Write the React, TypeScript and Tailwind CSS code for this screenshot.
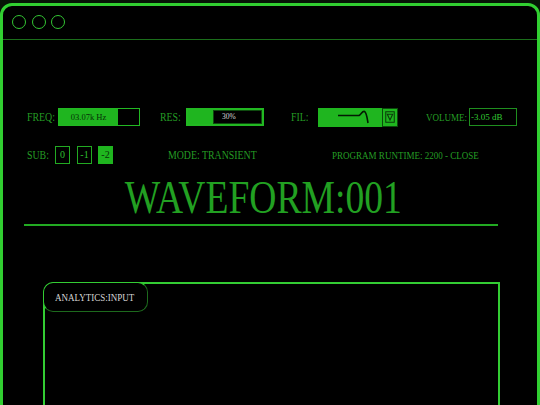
import React from "react";

const serif = { fontFamily: '"Liberation Serif", "Times New Roman", serif' };

function Label({ text, w, ml = 0, size = 12 }: { text: string; w: number; ml?: number; size?: number }) {
  return (
    <div className="shrink-0 flex items-center" style={{ width: w, marginLeft: ml }}>
      <span
        className="inline-block origin-left scale-x-[0.82] whitespace-nowrap leading-none text-[#249c24]"
        style={{ fontSize: size }}
      >
        {text}
      </span>
    </div>
  );
}

export default function App() {
  return (
    <div className="w-[540px] h-[405px] overflow-hidden bg-[#061406] pt-[3px]" style={serif}>
      <div className="w-[540px] h-[420px] border-[3px] border-[#31cf31] rounded-t-[12px] bg-black">
        {/* Title bar */}
        <div className="h-[34px] border-b border-[#1b6e1b] flex items-center pl-[9px] gap-[5.5px] pb-[1px]">
          <div className="w-[14px] h-[14px] rounded-full border-[1.5px] border-[#33c633]" />
          <div className="w-[14px] h-[14px] rounded-full border-[1.5px] border-[#33c633]" />
          <div className="w-[14px] h-[14px] rounded-full border-[1.5px] border-[#33c633]" />
        </div>

        <div className="ml-[21px] w-[474px]">
          {/* Row 1 */}
          <div className="mt-[68px] h-[18px] flex items-center">
            <Label text="FREQ:" w={31} ml={3} />
            <div className="shrink-0 w-[82px] h-[18px] border-[1.5px] border-[#22b822] flex">
              <div className="w-[59px] h-full bg-[#1fb51f] flex items-center justify-center text-[8.5px] leading-none text-[#063006]">
                03.07k Hz
              </div>
              <div className="flex-1 bg-black" />
            </div>

            <Label text="RES:" w={26} ml={20} />
            <div className="shrink-0 w-[78px] h-[18px] border-2 border-[#22b822] flex">
              <div className="w-[25px] h-full bg-[#1fb51f]" />
              <div className="flex-1 bg-black border border-[#0e4a0e] flex items-center pl-[8px] text-[7.5px] leading-none text-[#d8d8d8]">
                30%
              </div>
            </div>

            <Label text="FIL:" w={27} ml={27} />
            <div className="shrink-0 w-[80px] h-[19px] flex bg-[#1fb51f]">
              <div className="w-[64px] h-full relative">
                <svg width="64" height="19" viewBox="0 0 64 19" className="absolute left-0 top-0">
                  <path d="M20 7.5 L41 7.5 C43 6.5 44.5 2.5 46.5 3.5 C48.5 4.5 49 9 50 15" fill="none" stroke="#031a03" strokeWidth="1.6" />
                </svg>
              </div>
              <div className="w-[16px] h-full border-[1.5px] border-[#0b4a0b] flex items-center justify-center">
                <svg width="10" height="12" viewBox="0 0 10 12">
                  <rect x="0.75" y="0.75" width="8.5" height="10.5" fill="none" stroke="#0a3a0a" strokeWidth="1" />
                  <path d="M2.3 3.2 L7.7 3.2 L5 9 Z" fill="none" stroke="#0a3a0a" strokeWidth="1.1" />
                </svg>
              </div>
            </div>

            <Label text="VOLUME:" w={43} ml={28} size={11} />
            <div className="shrink-0 w-[48px] h-[18px] border-[1.5px] border-[#1f8f1f] flex items-center pl-[1px] text-[9px] leading-none text-[#33cc33] whitespace-nowrap">
              -3.05 dB
            </div>
          </div>

          {/* Row 2 */}
          <div className="mt-[20px] h-[18px] flex items-center">
            <Label text="SUB:" w={28} ml={3} />
            <div className="shrink-0 w-[15px] h-[18px] border-[1.5px] border-[#22aa22] flex items-center justify-center text-[10px] leading-none text-[#2fbf2f]">
              0
            </div>
            <div className="shrink-0 ml-[7px] w-[15px] h-[18px] border-[1.5px] border-[#22aa22] flex items-center justify-center text-[10px] leading-none text-[#2fbf2f]">
              -1
            </div>
            <div className="shrink-0 ml-[6px] w-[15px] h-[18px] bg-[#1fb51f] flex items-center justify-center text-[10px] leading-none text-[#063006]">
              -2
            </div>
            <Label text="MODE: TRANSIENT" w={164} ml={55} />
            <Label text="PROGRAM RUNTIME: 2200 - CLOSE" w={160} size={11} />
          </div>

          {/* Title */}
          <div className="mt-[10px] h-[47px] flex justify-center pl-[4px]">
            <span className="inline-block scale-x-[0.8] origin-center whitespace-nowrap text-[47px] leading-none text-[#22a022]">
              WAVEFORM:001
            </span>
          </div>
          <div className="mt-[3px] h-[2px] bg-[#22aa22]" />

          {/* Analytics panel */}
          <div className="mt-[56px] ml-[19px] w-[457px] h-[140px] border-2 border-[#33cc33] rounded-tl-[12px] relative">
            <div className="absolute -top-[2px] -left-[2px] w-[105px] h-[30px] rounded-[10px] border-[1.5px] border-t-[#33cc33] border-l-[#33cc33] border-r-[#1d6a1d] border-b-[#1d6a1d] bg-black flex items-center pl-[11px]">
              <span className="inline-block origin-left scale-x-[0.82] whitespace-nowrap text-[11px] leading-none text-[#d4d4d4]">
                ANALYTICS:INPUT
              </span>
            </div>
          </div>
        </div>
      </div>
    </div>
  );
}
